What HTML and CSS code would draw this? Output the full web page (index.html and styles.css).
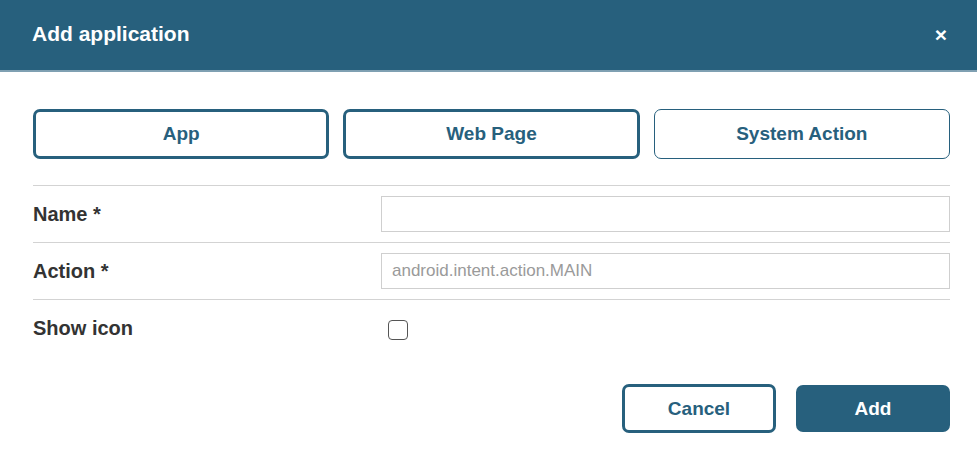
FILE: index.html
```html
<!DOCTYPE html>
<html lang="en">
<head>
    <meta charset="UTF-8">
    <title>Add application</title>
    <link rel="stylesheet" href="styles.css">
</head>
<body>
    <div class="dialog">
        <header class="dialog-header">
            <h1>Add application</h1>
            <button class="close-button" aria-label="Close">&times;</button>
        </header>

        <div class="dialog-body">
            <div class="type-tabs">
                <button class="tab-button selected">App</button>
                <button class="tab-button selected">Web Page</button>
                <button class="tab-button">System Action</button>
            </div>

            <div class="form-row">
                <label for="appName">Name *</label>
                <input type="text" id="appName">
            </div>
            <div class="form-row">
                <label for="appAction">Action *</label>
                <input type="text" id="appAction" placeholder="android.intent.action.MAIN">
            </div>
            <div class="form-row last">
                <label for="showIcon">Show icon</label>
                <div class="check-cell">
                    <input type="checkbox" id="showIcon" class="check">
                </div>
            </div>
        </div>

        <footer class="dialog-footer">
            <button class="footer-button outline">Cancel</button>
            <button class="footer-button primary">Add</button>
        </footer>
    </div>
</body>
</html>
```

FILE: styles.css
```css
:root {
    --primary: #27607d;
    --header-line: #7fa0b2;
    --text-dark: #333;
    --line: #d3d3d3;
    --input-border: #cfcfcf;
    --white: #ffffff;
}

* {
    margin: 0;
    padding: 0;
    box-sizing: border-box;
}

body {
    font-family: 'Liberation Sans', Arial, sans-serif;
    background-color: var(--white);
    color: var(--text-dark);
}

.dialog-header {
    height: 72px;
    background-color: var(--primary);
    border-bottom: 2px solid var(--header-line);
    display: flex;
    align-items: center;
    justify-content: space-between;
    padding: 0 30px 2px 32px;
}

.dialog-header h1 {
    color: var(--white);
    font-size: 21px;
    font-weight: 700;
}

.close-button {
    background: none;
    border: none;
    color: var(--white);
    font-family: inherit;
    font-size: 21px;
    font-weight: 700;
    line-height: 1;
    cursor: pointer;
}

.dialog-body {
    padding: 37px 27px 0 33px;
}

.type-tabs {
    display: grid;
    grid-template-columns: repeat(3, 1fr);
    gap: 14px;
    margin-bottom: 26px;
}

.tab-button {
    height: 50px;
    background-color: var(--white);
    color: var(--primary);
    border: 1.5px solid var(--primary);
    border-radius: 7px;
    font-family: inherit;
    font-size: 19px;
    font-weight: 700;
    cursor: pointer;
}

.tab-button.selected {
    border-width: 3px;
}

.form-row {
    display: grid;
    grid-template-columns: 348px 1fr;
    align-items: center;
    height: 57px;
    border-top: 1.5px solid var(--line);
}

.form-row label {
    font-size: 20px;
    font-weight: 700;
    color: var(--text-dark);
}

.form-row input[type="text"] {
    height: 36px;
    border: 1.5px solid var(--input-border);
    padding: 0 10px;
    font-family: inherit;
    font-size: 17px;
    color: var(--text-dark);
}

.form-row input::placeholder {
    color: #9a9a9a;
}

.form-row.last {
    height: 58px;
}

.check-cell {
    padding-left: 7px;
}

.check {
    appearance: none;
    display: block;
    width: 20px;
    height: 20px;
    border: 1.5px solid #555;
    border-radius: 4px;
    margin-top: 2px;
}

.dialog-footer {
    display: flex;
    justify-content: flex-end;
    gap: 20px;
    padding: 27px 27px 0 0;
}

.footer-button {
    width: 154px;
    height: 49px;
    border-radius: 7px;
    font-family: inherit;
    font-size: 19px;
    font-weight: 700;
    cursor: pointer;
}

.footer-button.outline {
    background-color: var(--white);
    color: var(--primary);
    border: 3px solid var(--primary);
}

.footer-button.primary {
    background-color: var(--primary);
    color: var(--white);
    border: none;
    height: 47px;
    margin-top: 1px;
}
```
